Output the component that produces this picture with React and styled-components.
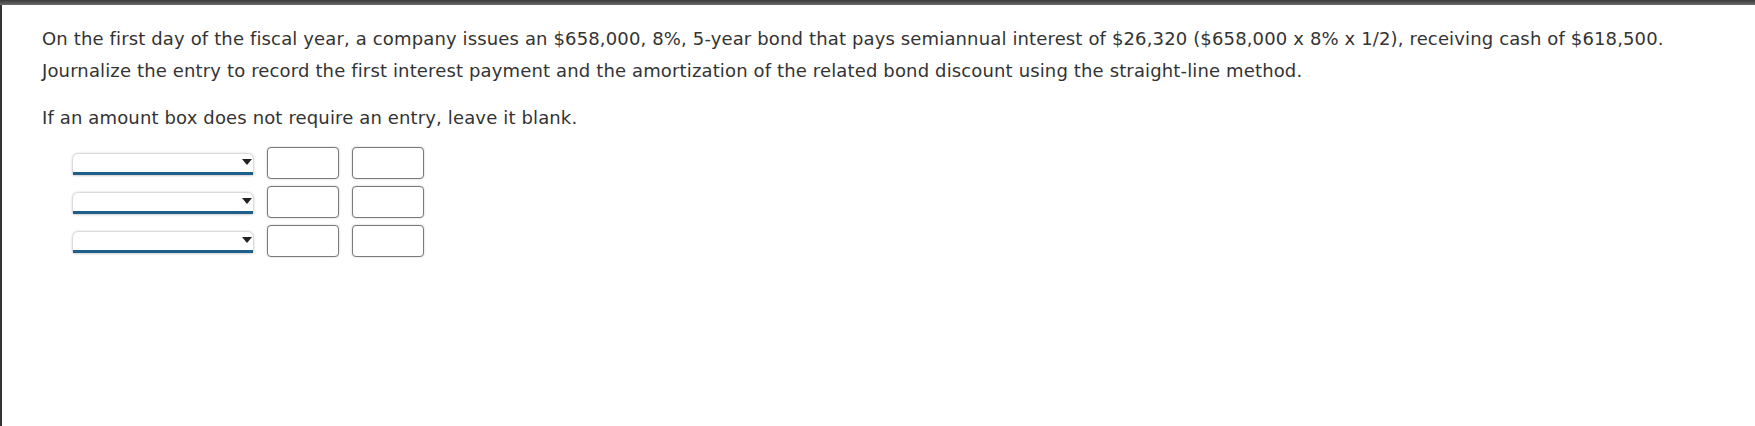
import React from 'react'
import styled, { createGlobalStyle } from 'styled-components'

const GlobalStyle = createGlobalStyle`
  html, body {
    margin: 0;
    padding: 0;
    background: #fff;
  }
  body {
    font-family: 'DejaVu Sans', Verdana, sans-serif;
    color: #333;
  }
`

const Frame = styled.div`
  min-height: 426px;
  box-sizing: border-box;
  border-left: 2px solid #333;
`

const TopBar = styled.div`
  height: 5px;
  background: linear-gradient(to bottom, #3a3a3a, #6a6a6a);
  margin-left: -2px;
`

const Question = styled.div`
  padding: 18px 0 0 40px;
  font-size: 18px;
  letter-spacing: 0.14px;
  line-height: 32px;
`

const Para = styled.p`
  margin: 0 0 ${p => p.gap || 0}px;
  white-space: nowrap;
`

const Entries = styled.div`
  display: flex;
  flex-direction: column;
  gap: 7px;
  margin: 13px 0 0 71px;
`

const Row = styled.div`
  display: flex;
  align-items: center;
  height: 32px;
`

const SelectWrap = styled.div`
  position: relative;
  width: 180px;
  height: 21px;
  margin-right: 14px;
`

const Select = styled.select`
  appearance: none;
  width: 100%;
  height: 100%;
  box-sizing: border-box;
  background: #fff;
  border: none;
  border-bottom: 3px solid #1f5f8b;
  border-radius: 5px 5px 0 0;
  box-shadow: 0 0 3px rgba(0, 0, 0, 0.4);
  padding: 0 16px 0 4px;
  font: inherit;
  font-size: 14px;
  outline: none;
`

const Arrow = styled.span`
  position: absolute;
  right: 1px;
  top: 6px;
  width: 0;
  height: 0;
  border-left: 5px solid transparent;
  border-right: 5px solid transparent;
  border-top: 6px solid #222;
  pointer-events: none;
`

const Amount = styled.input`
  width: 72px;
  height: 32px;
  box-sizing: border-box;
  border: 1px solid #7a7a7a;
  border-radius: 4px;
  box-shadow: 0 0 2px rgba(0, 0, 0, 0.25);
  margin-right: ${p => (p.last ? 0 : 13)}px;
  padding: 0 4px;
  font: inherit;
  font-size: 14px;
  outline: none;
`

const rows = [1, 2, 3]

const App = () => {
  return (
    <>
      <GlobalStyle />
      <Frame>
        <TopBar />
        <Question>
          <Para>
            On the first day of the fiscal year, a company issues an $658,000, 8%, 5-year bond that pays
            semiannual interest of $26,320 ($658,000 x 8% x 1/2), receiving cash of $618,500.
          </Para>
          <Para gap={15}>
            Journalize the entry to record the first interest payment and the amortization of the related
            bond discount using the straight-line method.
          </Para>
          <Para>If an amount box does not require an entry, leave it blank.</Para>
        </Question>
        <Entries>
          {rows.map(r => (
            <Row key={r}>
              <SelectWrap>
                <Select defaultValue=''>
                  <option value=''></option>
                </Select>
                <Arrow />
              </SelectWrap>
              <Amount type='text' />
              <Amount type='text' last />
            </Row>
          ))}
        </Entries>
      </Frame>
    </>
  )
}

export default App
